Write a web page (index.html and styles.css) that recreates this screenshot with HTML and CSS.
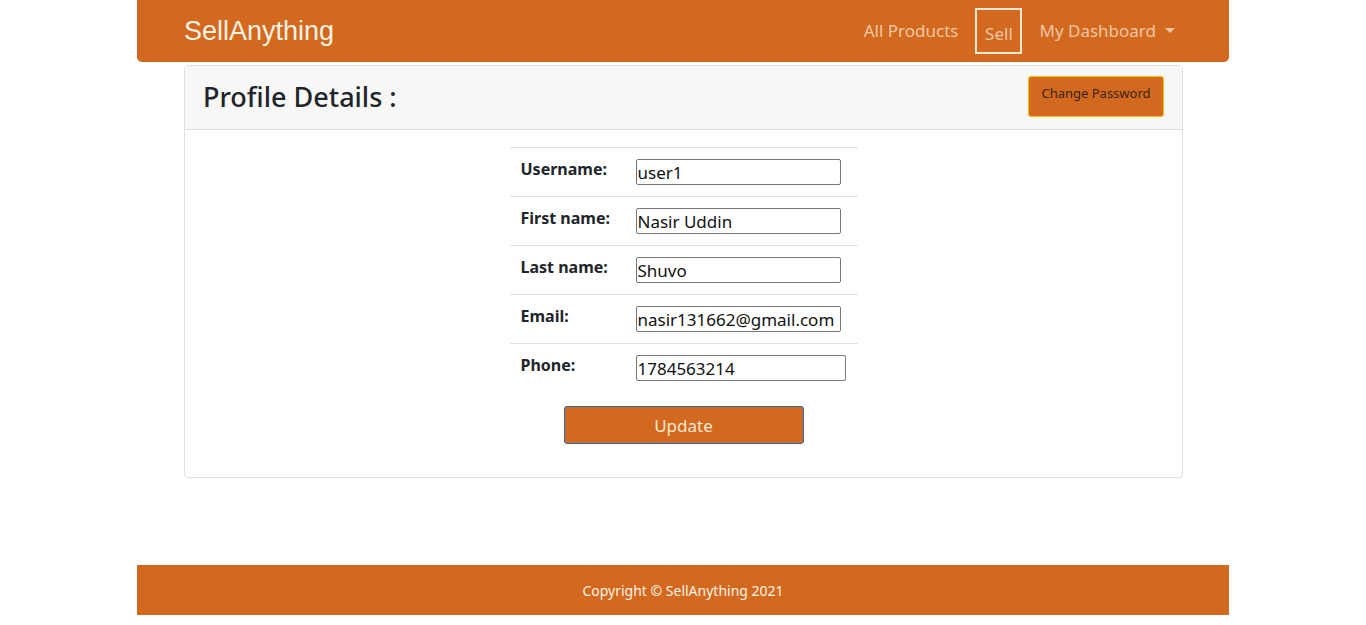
FILE: index.html
```html
<!DOCTYPE html>
<html lang="en">
<head>
<meta charset="utf-8">
<title>SellAnything - Profile</title>
<link rel="stylesheet" href="styles.css">
</head>
<body>
<div class="page">
  <nav class="navbar">
    <a class="brand" href="#">SellAnything</a>
    <ul class="nav">
      <li><a class="nav-link" href="#">All Products</a></li>
      <li><a class="nav-link boxed" href="#">Sell</a></li>
      <li><a class="nav-link dropdown" href="#">My Dashboard <span class="caret"></span></a></li>
    </ul>
  </nav>

  <section class="card">
    <div class="card-header">
      <h2 class="title">Profile Details :</h2>
      <button class="btn-pass">Change Password</button>
    </div>
    <div class="card-body">
      <form class="profile-form">
        <table class="profile-table">
          <tr>
            <th class="label">Username:</th>
            <td class="value"><input class="field" type="text" value="user1"></td>
          </tr>
          <tr>
            <th class="label">First name:</th>
            <td class="value"><input class="field" type="text" value="Nasir Uddin"></td>
          </tr>
          <tr>
            <th class="label">Last name:</th>
            <td class="value"><input class="field" type="text" value="Shuvo"></td>
          </tr>
          <tr>
            <th class="label">Email:</th>
            <td class="value"><input class="field" type="text" value="nasir131662@gmail.com"></td>
          </tr>
          <tr>
            <th class="label">Phone:</th>
            <td class="value"><input class="field wide" type="text" value="1784563214"></td>
          </tr>
        </table>
        <button class="btn-update" type="button">Update</button>
      </form>
    </div>
  </section>

  <footer class="footer">Copyright © SellAnything 2021</footer>
</div>
</body>
</html>
```

FILE: styles.css
```css
* { box-sizing: border-box; }

body {
  margin: 0;
  background: #ffffff;
  font-family: "Noto Sans", "Open Sans", sans-serif;
  color: #212529;
}

.page {
  width: 1092px;
  margin: 0 auto;
}

.navbar {
  height: 62px;
  background: #d2691e;
  border-radius: 0 0 5px 5px;
  display: flex;
  align-items: center;
  justify-content: space-between;
  padding: 0 54px 0 47px;
}

.brand {
  font-family: "Liberation Sans", Arial, sans-serif;
  font-size: 27px;
  color: #fdf2e4;
  text-decoration: none;
  margin-top: 1px;
}

.nav {
  list-style: none;
  margin: 0;
  padding: 0;
  display: flex;
  align-items: center;
  gap: 17px;
  margin-top: -2px;
}

.nav-link {
  font-size: 17px;
  color: #f0c6a4;
  text-decoration: none;
  display: flex;
  align-items: center;
}

.nav-link.boxed {
  width: 47px;
  height: 46px;
  padding: 4px 0 0;
  justify-content: center;
  border: 2px solid #fbe7d6;
  margin-top: 2px;
}

.caret {
  display: inline-block;
  width: 0;
  height: 0;
  margin-left: 9px;
  border-left: 5px solid transparent;
  border-right: 5px solid transparent;
  border-top: 5px solid #f0c6a4;
}

.card {
  width: 999px;
  margin: 3px 0 0 47px;
  border: 1px solid #dfdfdf;
  border-radius: 4px;
}

.card-header {
  height: 64px;
  background: #f7f7f7;
  border-bottom: 1px solid #dfdfdf;
  display: flex;
  align-items: center;
  justify-content: space-between;
  padding: 0 18px 0 18px;
}

.title {
  margin: -2px 0 0;
  font-size: 27px;
  font-weight: 500;
  color: #212529;
}

.btn-pass {
  width: 136px;
  height: 41px;
  margin-top: -3px;
  background: #d2691e;
  border: 1px solid #ffc107;
  border-radius: 3px;
  font-family: "Noto Sans", sans-serif;
  font-size: 13px;
  color: #3b2412;
  padding: 0 0 6px;
}

.card-body {
  padding: 17px 0 33px;
}

.profile-form {
  display: flex;
  flex-direction: column;
  align-items: center;
}

.profile-table {
  width: 348px;
  border-collapse: collapse;
}

.profile-table tr {
  border-top: 1px solid #e2e2e2;
}

.label {
  width: 126px;
  padding: 9px 0 11px 11px;
  text-align: left;
  vertical-align: top;
  font-size: 16px;
  font-weight: 700;
  line-height: 24px;
  white-space: nowrap;
}

.value {
  padding: 11px 12px 11px 0;
  vertical-align: top;
}

.field {
  display: block;
  width: 205px;
  height: 26px;
  border: 1px solid #767676;
  border-radius: 2px;
  padding: 0 1px;
  font-family: "Noto Sans", sans-serif;
  font-size: 17px;
  color: #111;
}

.field.wide { width: 210px; }

.btn-update {
  margin-top: 14px;
  width: 240px;
  height: 38px;
  background: #d2691e;
  border: 1px solid #2e6da4;
  border-radius: 3px;
  font-family: "Noto Sans", sans-serif;
  font-size: 17px;
  color: #fbe9d0;
}

.footer {
  margin-top: 87px;
  height: 50px;
  background: #d2691e;
  color: #fdf3e8;
  font-size: 14px;
  display: flex;
  align-items: center;
  justify-content: center;
}
```
